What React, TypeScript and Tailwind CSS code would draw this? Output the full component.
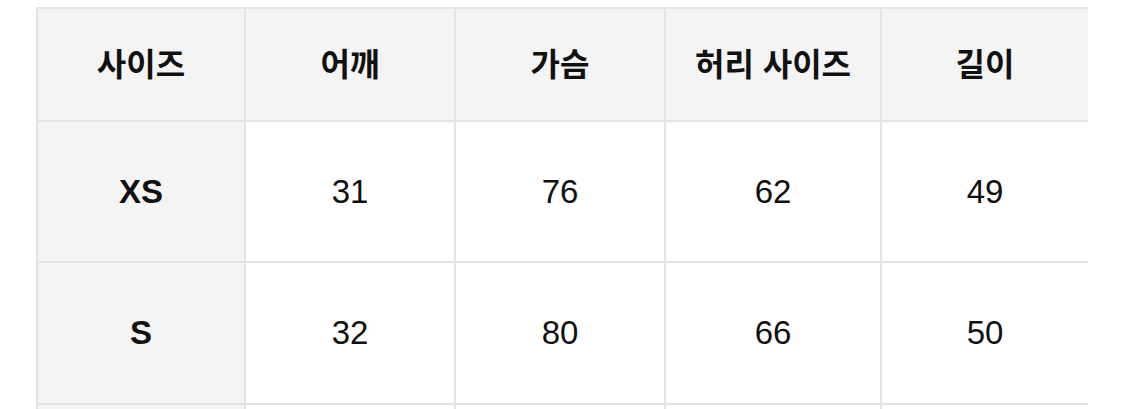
const headers = ["사이즈", "어깨", "가슴", "허리 사이즈", "길이"];

const rows = [
    { size: "XS", values: ["31", "76", "62", "49"], height: "h-[141px]" },
    { size: "S", values: ["32", "80", "66", "50"], height: "h-[142px]" },
];

const widths = ["w-[208px]", "w-[210px]", "w-[210px]", "w-[216px]", "w-[208px]"];

export default function App() {
    return (
        <div
            className="w-[1125px] h-[409px] overflow-hidden bg-white text-[#111]"
            style={{ fontFamily: '"Liberation Sans", "Noto Sans CJK KR", sans-serif' }}
        >
            <div className="ml-[36px] mt-[7px] w-[1052px] overflow-hidden">
                <table className="border-collapse table-fixed w-[1052px]">
                    <thead>
                        <tr className="h-[113px] bg-[#f4f4f4]">
                            {headers.map((h, i) => (
                                <th
                                    key={h}
                                    className={`${widths[i]} border-2 border-[#e4e4e4] text-[32px] font-bold text-center align-middle`}
                                >
                                    {h}
                                </th>
                            ))}
                        </tr>
                    </thead>
                    <tbody>
                        {rows.map((row) => (
                            <tr key={row.size} className={row.height}>
                                <td className="border-2 border-[#e4e4e4] bg-[#f4f4f4] text-[33px] font-bold text-center align-middle">
                                    {row.size}
                                </td>
                                {row.values.map((v, i) => (
                                    <td
                                        key={i}
                                        className="border-2 border-[#e4e4e4] text-[33px] text-center align-middle"
                                    >
                                        {v}
                                    </td>
                                ))}
                            </tr>
                        ))}
                        {/* next row peeks in at the bottom edge */}
                        <tr className="h-[142px]">
                            <td className="border-2 border-[#e4e4e4] bg-[#f4f4f4]" />
                            <td className="border-2 border-[#e4e4e4]" />
                            <td className="border-2 border-[#e4e4e4]" />
                            <td className="border-2 border-[#e4e4e4]" />
                            <td className="border-2 border-[#e4e4e4]" />
                        </tr>
                    </tbody>
                </table>
            </div>
        </div>
    );
}
